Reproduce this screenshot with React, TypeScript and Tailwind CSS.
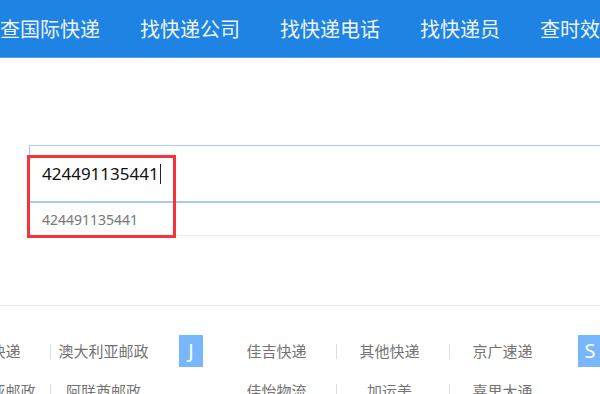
const navItems = ["查国际快递", "找快递公司", "找快递电话", "找快递员", "查时效"];

interface Group {
  letter: string;
  items: string[];
}

const groups: Group[] = [
  {
    letter: "A",
    items: ["安信达快递", "安能快递", "澳大利亚邮政", "阿尔巴尼亚", "亚美尼亚邮政", "阿联酋邮政"],
  },
  {
    letter: "J",
    items: ["佳吉快递", "其他快递", "京广速递", "佳怡物流", "加运美", "嘉里大通"],
  },
  {
    letter: "S",
    items: ["顺丰速运", "申通快递", "速尔快递", "盛辉物流", "三态速递", "上大物流"],
  },
];

const App = () => {
  const query = "424491135441";

  return (
    <div className="relative h-[394px] w-[600px] overflow-hidden bg-white font-['Noto_Sans','Noto_Sans_CJK_SC',sans-serif]">
      <nav className="flex h-[58px] items-center gap-[40px] whitespace-nowrap border-b border-[#55a3ee] bg-[#1e83e2] pt-[2px] text-[20px] text-[#eef5ff]">
        {navItems.map((item) => (
          <span key={item}>{item}</span>
        ))}
      </nav>

      <div className="pl-[29px] pt-[87px]">
        <div className="border-l border-t border-[#a8cbf6]">
          <div className="flex h-[57px] items-center border-b-2 border-[#a8cbf6] pl-[12px] text-[17px] text-[#111]">
            {query}
            <span className="ml-[1px] inline-block h-[20px] w-px bg-[#222]" />
          </div>
          <div className="flex h-[33px] items-center border-b border-[#ececec] pl-[12px] text-[14px] text-[#777]">
            {query}
          </div>
        </div>
      </div>

      {/* highlight annotation */}
      <div className="absolute left-[27px] top-[155px] h-[83px] w-[149px] border-[3px] border-[#f5333b]" />

      <div className="mt-[69px] border-t border-[#e6e6e6]">
        <div className="ml-[-236px] flex whitespace-nowrap pt-[25px]">
          {groups.map((group) => (
            <div key={group.letter} className="flex shrink-0">
              <div className="w-[60px] shrink-0 pl-[16px] pt-[4px]">
                <div className="flex h-[32px] w-[24px] items-center justify-center bg-[#78b7fe] text-[20px] text-white">
                  {group.letter}
                </div>
              </div>
              <div className="grid w-[339px] grid-cols-3">
                {group.items.map((name, i) => (
                  <div key={name} className="flex h-[40px] items-center">
                    <span
                      className={`h-[15px] w-px ${i % 3 === 0 ? "bg-transparent" : "bg-[#dddddd]"}`}
                    />
                    <span className="flex-1 pr-[7px] text-center text-[15px] text-[#747474]">{name}</span>
                  </div>
                ))}
              </div>
            </div>
          ))}
        </div>
      </div>
    </div>
  );
};

export default App;
